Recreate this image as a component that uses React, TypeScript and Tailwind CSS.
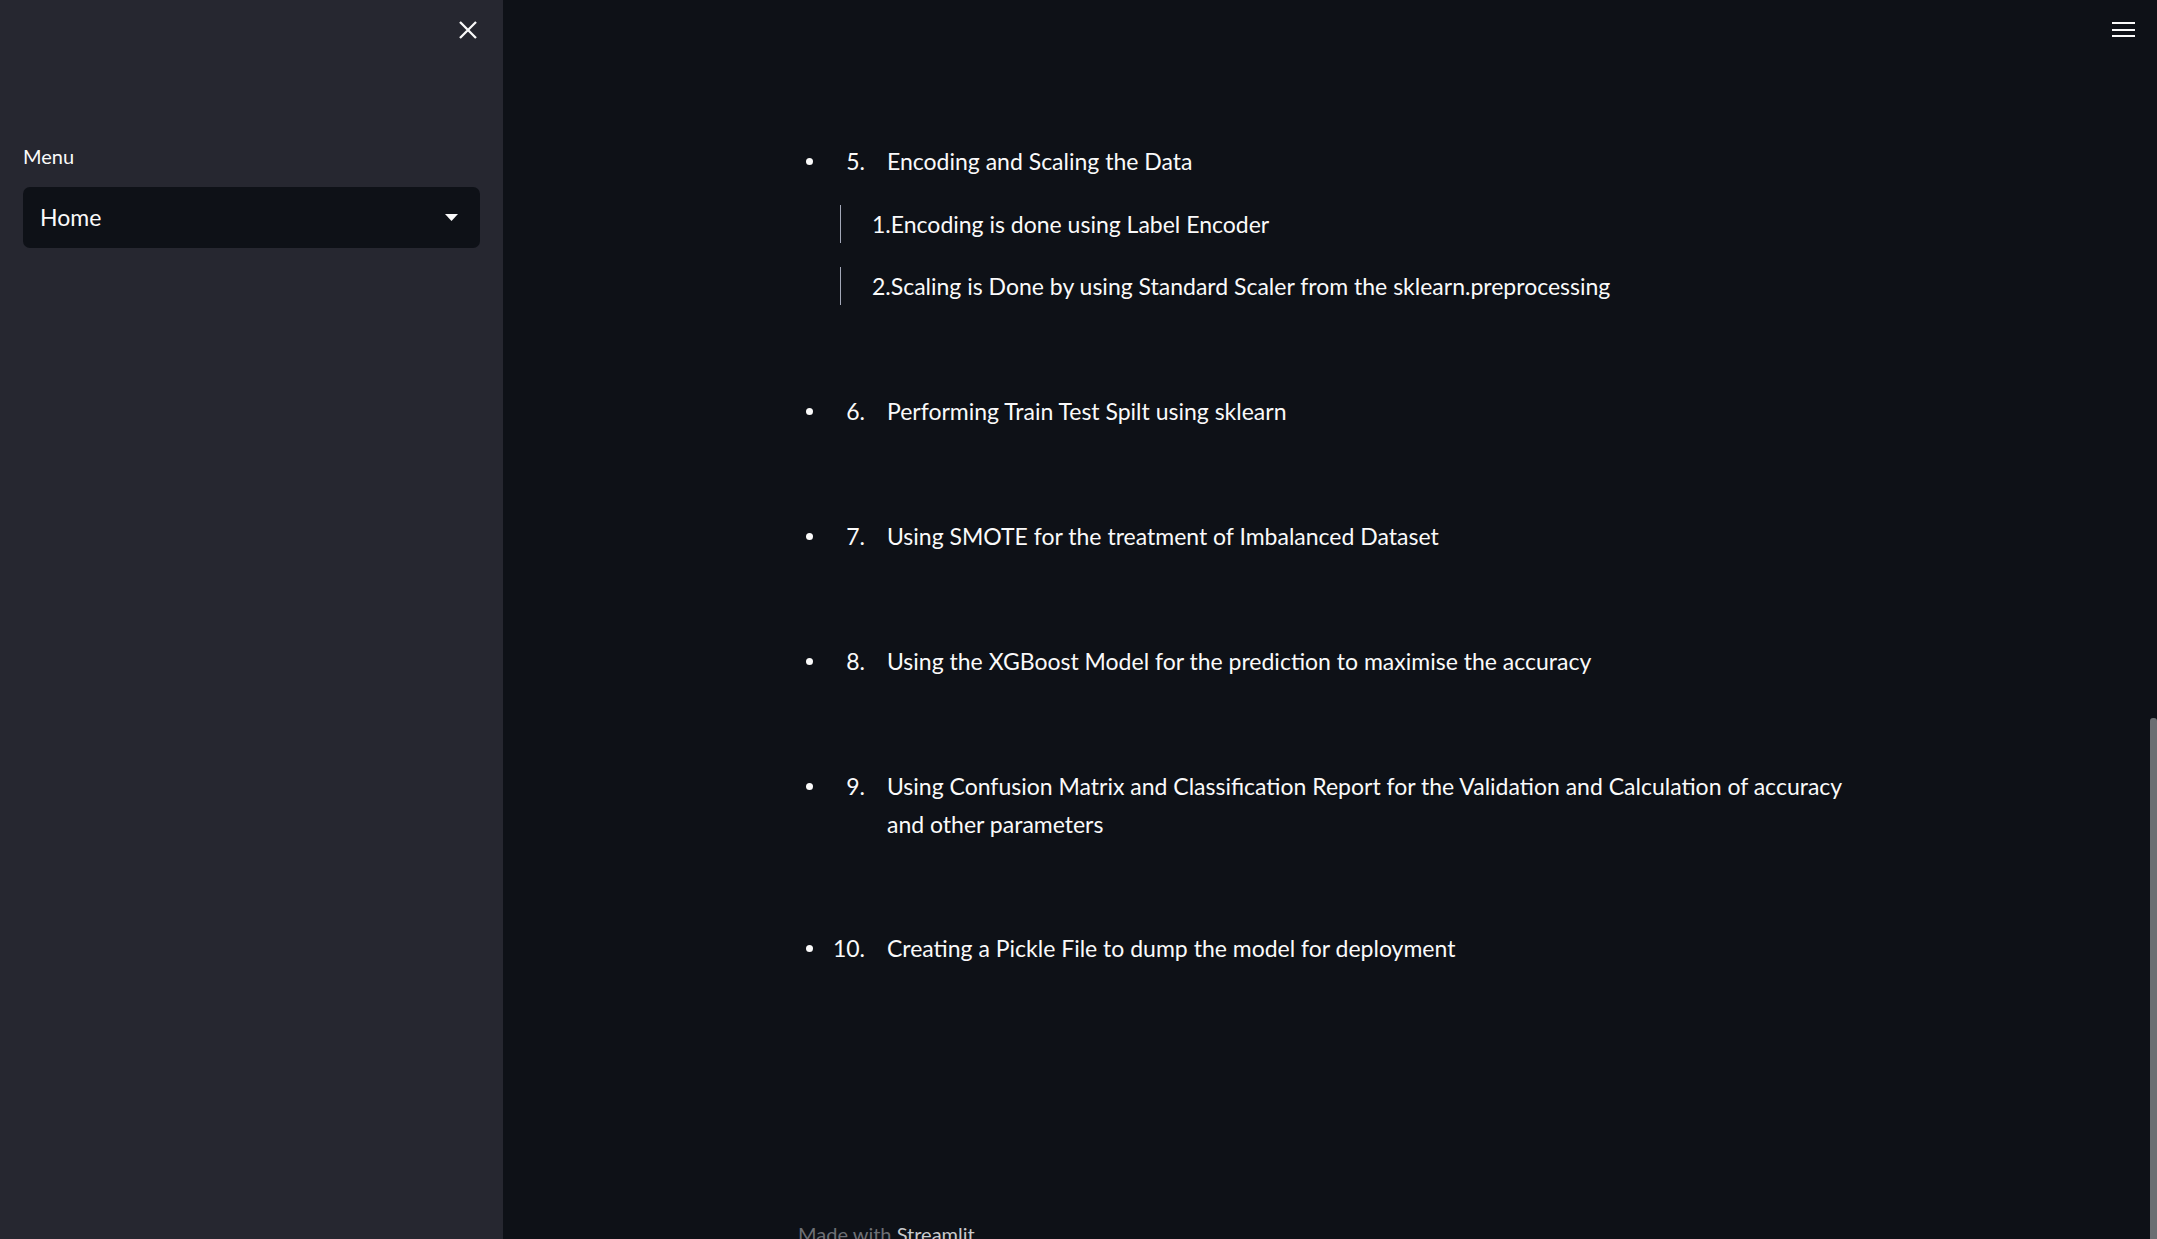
import React from "react";

const font = { fontFamily: "Lato, 'Open Sans', sans-serif" };

function Item({ n, children, className = "" }: { n: string; children: React.ReactNode; className?: string }) {
  return (
    <div className={"flex items-start " + className}>
      <div className="w-[16px] h-[38px] flex items-center justify-center shrink-0">
        <div className="w-[7px] h-[7px] rounded-full bg-[#fafafa]" />
      </div>
      <div className="w-[48px] text-right leading-[38px] shrink-0">{n}</div>
      <div className="ml-[22px] w-[975px] leading-[38px]">{children}</div>
    </div>
  );
}

function Quote({ children, className = "" }: { children: React.ReactNode; className?: string }) {
  return (
    <div className={"ml-[39px] border-l border-[#a3a8b8] pl-[31px] leading-[38px] " + className}>{children}</div>
  );
}

export default function App() {
  return (
    <div className="relative flex h-[1239px] w-full overflow-hidden bg-[#0e1117] text-[#fafafa]" style={font}>
      <aside className="w-[503px] shrink-0 bg-[#262730] flex flex-col">
        <div className="flex justify-end pt-[21px] pr-[26px]">
          <svg width="18" height="18" viewBox="0 0 18 18" fill="none" stroke="#fafafa" strokeWidth="2.3" strokeLinecap="square">
            <path d="M1.8 1.8 L16.2 16.2 M16.2 1.8 L1.8 16.2" />
          </svg>
        </div>
        <div className="ml-[23px] mt-[103px] text-[20px] leading-[28px]">Menu</div>
        <div className="mx-[23px] mt-[17px] h-[61px] rounded-[7px] bg-[#0e1117] flex items-center justify-between pl-[17px] pr-[22px]">
          <span className="text-[23px]">Home</span>
          <svg width="13" height="8" viewBox="0 0 13 8" fill="#fafafa">
            <path d="M0 0 H13 L6.5 7 Z" />
          </svg>
        </div>
      </aside>
      <main className="flex-1 relative">
        <div className="ml-[298px] pt-[142px] text-[23px] flex flex-col">
          <Item n="5.">Encoding and Scaling the Data</Item>
          <Quote className="mt-[25px]">1.Encoding is done using Label Encoder</Quote>
          <Quote className="mt-[24px]">2.Scaling is Done by using Standard Scaler from the sklearn.preprocessing</Quote>
          <Item n="6." className="mt-[87px]">Performing Train Test Spilt using sklearn</Item>
          <Item n="7." className="mt-[87px]">Using SMOTE for the treatment of Imbalanced Dataset</Item>
          <Item n="8." className="mt-[87px]">Using the XGBoost Model for the prediction to maximise the accuracy</Item>
          <Item n="9." className="mt-[87px]">
            Using Confusion Matrix and Classification Report for the Validation and Calculation of accuracy and other parameters
          </Item>
          <Item n="10." className="mt-[86px]">Creating a Pickle File to dump the model for deployment</Item>
          <div className="mt-[252px] -ml-[3px] text-[20px] leading-[31px]">
            <span className="text-[#6d6f75]">Made with </span>
            <span className="text-[#c9cacd]">Streamlit</span>
          </div>
        </div>
        <div className="absolute top-[22px] right-[22px] flex flex-col gap-[4.5px]">
          <div className="w-[23px] h-[2px] bg-[#fafafa]" />
          <div className="w-[23px] h-[2px] bg-[#fafafa]" />
          <div className="w-[23px] h-[2px] bg-[#fafafa]" />
        </div>
        <div className="absolute right-0 top-[718px] bottom-0 w-[7px] rounded-t-[3px] bg-[#6b6e72]" />
      </main>
    </div>
  );
}
